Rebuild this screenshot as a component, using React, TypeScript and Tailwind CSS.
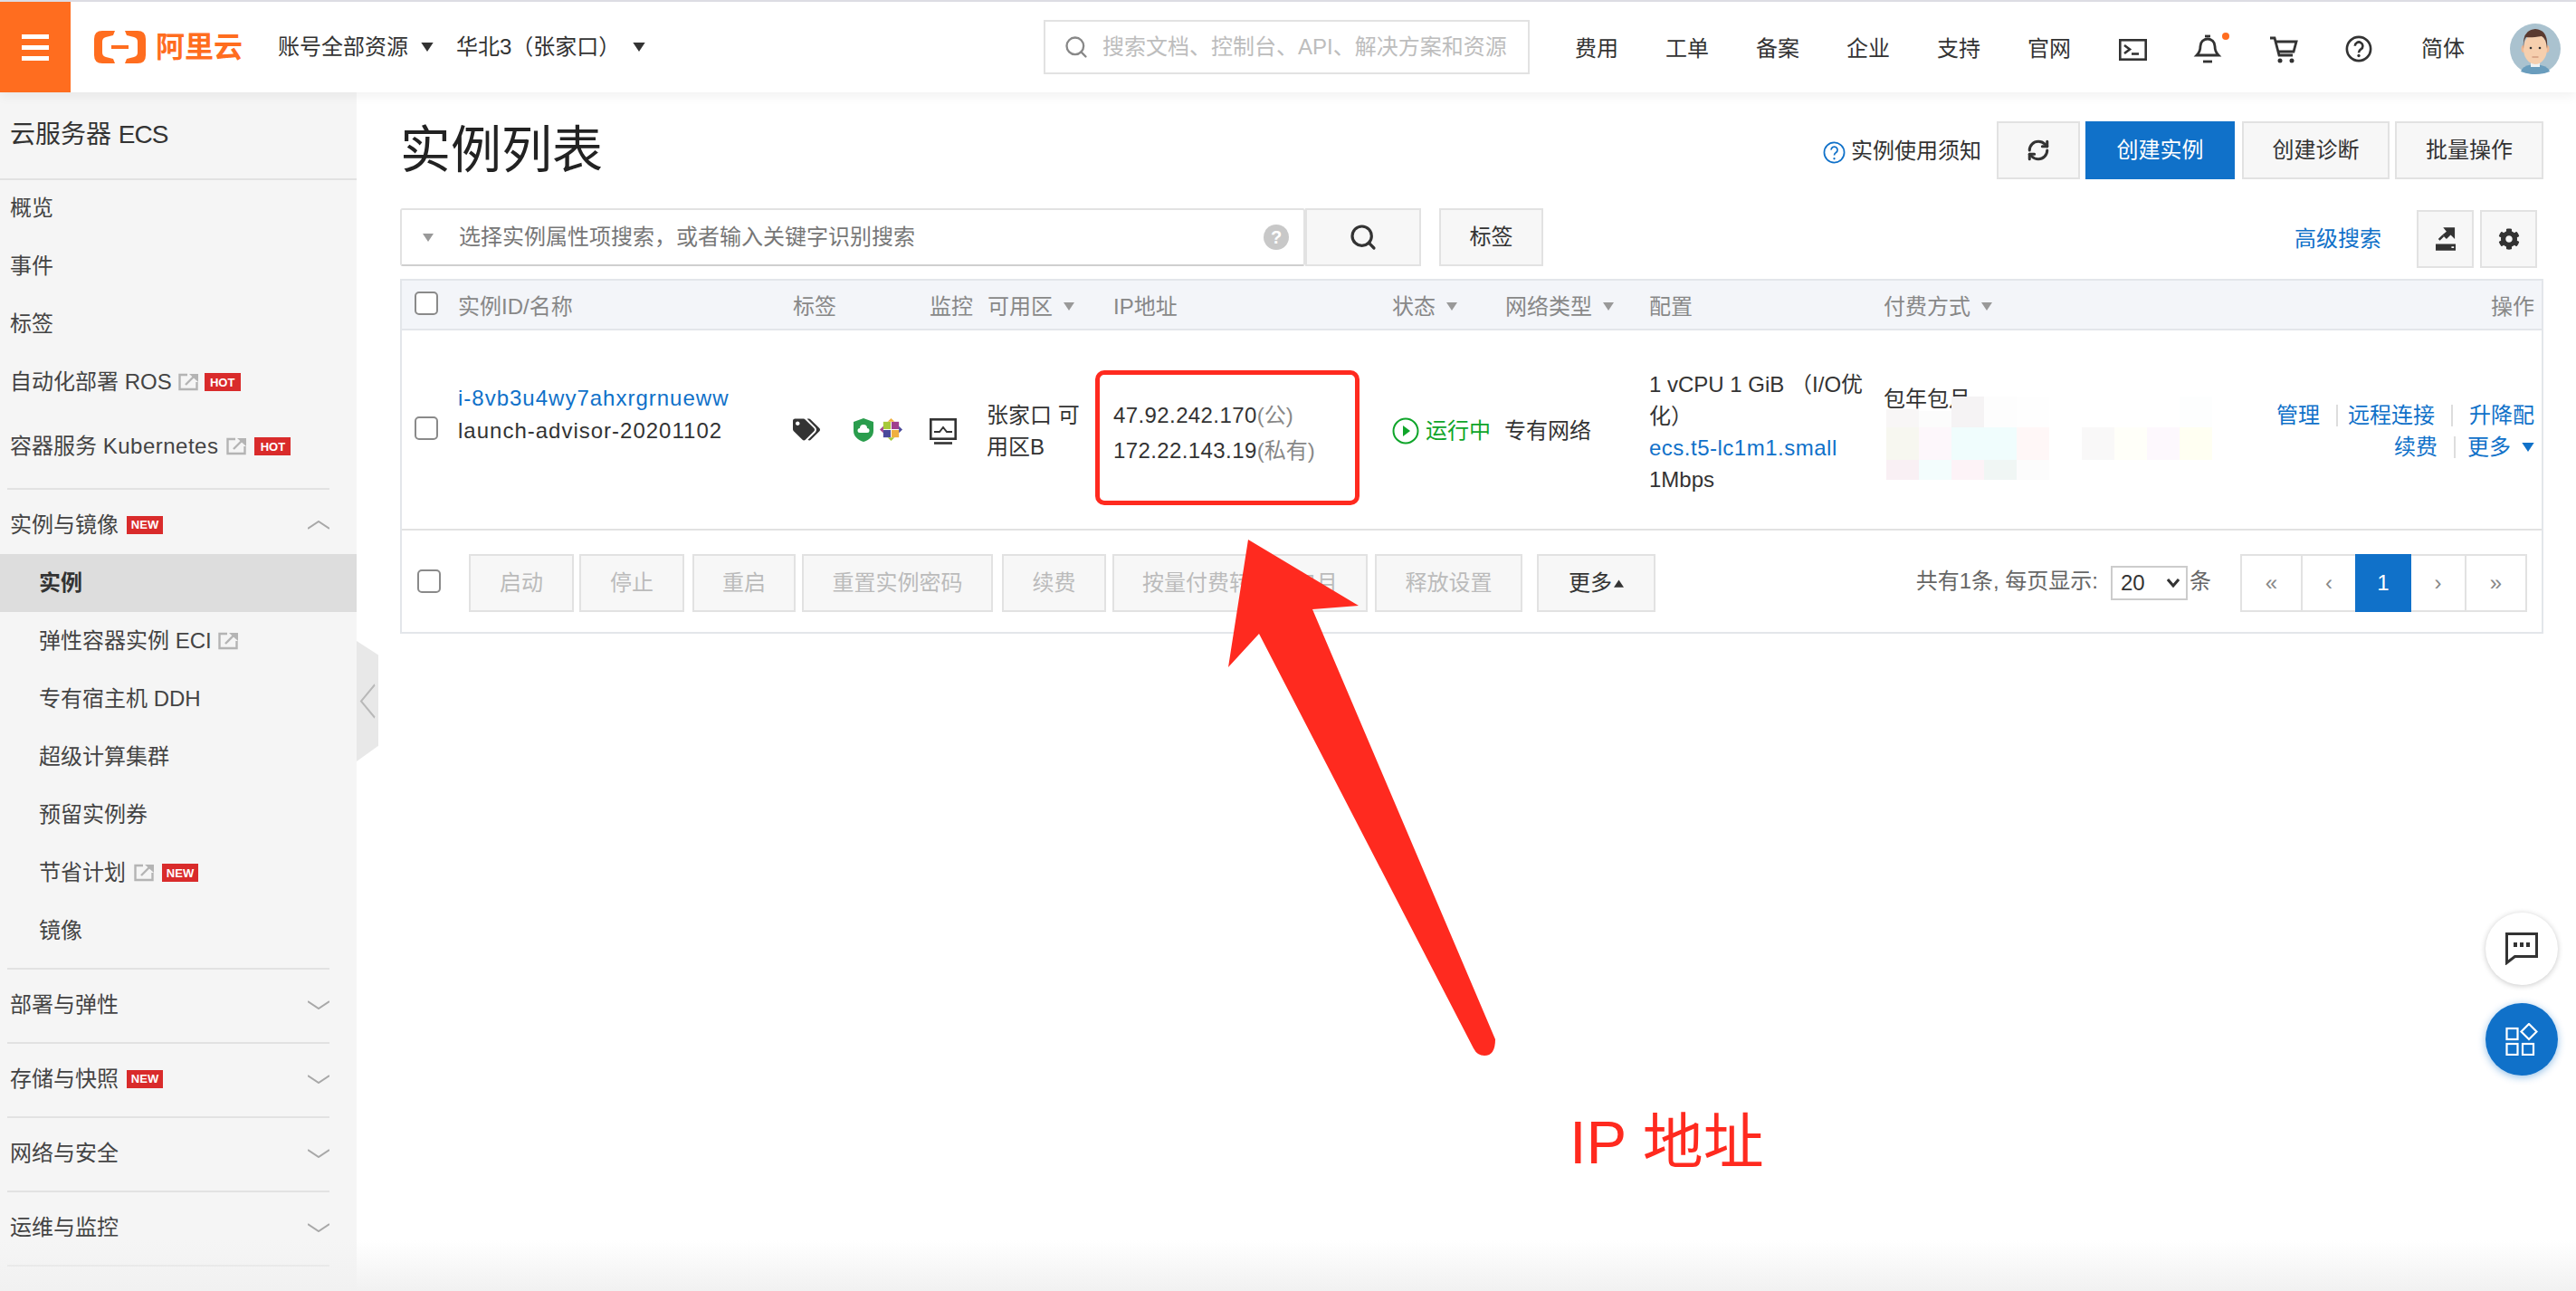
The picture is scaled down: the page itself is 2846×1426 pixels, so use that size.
import { RefreshCw, Search } from 'lucide-react'
import { FaCog, FaTags } from 'react-icons/fa'

const gridCols = 'grid grid-cols-[62px_370px_151px_64px_139px_308px_125px_159px_259px_1fr_auto]'
const btn = 'flex items-center justify-center h-[64px] border-2 border-[#e2e2e2] bg-[#f7f7f7] text-[24px] text-[#333]'

const navItems = ['费用', '工单', '备案', '企业', '支持', '官网']
const footerButtons = [
  { label: '启动', cls: 'w-[116px] ml-[31px]' },
  { label: '停止', cls: 'w-[116px] ml-[6px]' },
  { label: '重启', cls: 'w-[114px] ml-[9px]' },
  { label: '重置实例密码', cls: 'w-[211px] ml-[7px]' },
  { label: '续费', cls: 'w-[115px] ml-[10px]' },
  { label: '按量付费转包年包月', cls: 'w-[282px] ml-[7px]' },
  { label: '释放设置', cls: 'w-[163px] ml-[8px]' },
]
const blurRowHeights = ['h-[34px]', 'h-[36px]', 'h-[22px]']
const blurRows = [
  ['mt-[14px] bg-[#f8f6f6]', 'mt-[16px] bg-[#fcfcfc]', 'bg-[#f5f3f4]', 'bg-[#fdfdfd]', 'bg-[#fefefe]', 'bg-white', 'bg-white', 'bg-white', 'bg-white', 'bg-[#fdfefe]'],
  ['bg-[#f7f7f0]', 'bg-[#fdf7fb]', 'bg-[#f0fdfd]', 'bg-[#f0fdfd]', 'bg-[#fff7f7]', 'bg-white', 'bg-[#f9f8f8]', 'bg-[#fffff9]', 'bg-[#fdf8fd]', 'bg-[#fffff2]'],
  ['bg-[#f9f0f4]', 'bg-[#f3fdfd]', 'bg-[#fdf3f7]', 'bg-[#f0f6f4]', 'bg-[#fcfcfc]', 'bg-transparent', 'bg-transparent', 'bg-transparent', 'bg-transparent', 'bg-transparent'],
]

function Caret({ up, className }: { up?: boolean; className: string }) {
  return (
    <svg viewBox="0 0 12 9" className={className}>
      <path d={up ? 'M6 0l6 9H0z' : 'M0 0h12L6 9z'} fill="currentColor" />
    </svg>
  )
}

function Checkbox() {
  return <div className="w-[26px] h-[26px] rounded-[5px] border-2 border-[#8a8a8a] bg-white" />
}

function Badge({ text }: { text: string }) {
  return (
    <span className="flex items-center justify-center w-[40px] h-[20px] bg-[#d92b2b] text-white text-[13px] font-bold leading-none">
      {text}
    </span>
  )
}

function ExternalIcon() {
  return (
    <svg viewBox="0 0 22 20" className="w-[22px] h-[20px] text-[#b4b4b4]" fill="none" stroke="currentColor" strokeWidth="2.4">
      <path d="M10 2H1.500v16h19v-8" />
      <path d="M8 13l9-9" />
      <path d="M12 1h10v9z" fill="currentColor" stroke="none" />
    </svg>
  )
}

function Chevron({ up }: { up?: boolean }) {
  return (
    <svg viewBox="0 0 24 10" className="w-[24px] h-[10px] text-[#a8a8a8] ml-auto" fill="none" stroke="currentColor" strokeWidth="2">
      <path d={up ? 'M0 9L12 1l12 8' : 'M0 1l12 8L24 1'} />
    </svg>
  )
}

function Logo() {
  const bracket = 'M23 0l-2 5-8 2q-4 1-4 5v12q0 4 4 5l8 2 2 5H9q-9 0-9-9V9q0-9 9-9z'
  return (
    <div className="flex items-center ml-[26px]">
      <svg viewBox="0 0 57 36" className="w-[57px] h-[36px] text-[#ff6d1f]" fill="currentColor">
        <path d={bracket} />
        <path d={bracket} transform="translate(57 0) scale(-1 1)" />
        <rect x="19" y="16" width="19" height="4" />
      </svg>
      <span className="ml-[11px] text-[32px] leading-none font-bold text-[#ff6d1f]">阿里云</span>
    </div>
  )
}

function Avatar() {
  return (
    <svg viewBox="0 0 56 56" className="w-[56px] h-[56px] ml-[50px] mt-[4px]">
      <circle cx="28" cy="28" r="28" fill="#aac2cf" />
      <path d="M12 53q2-7 16-8 14 1 16 8-7 3-16 3t-16-3z" fill="#6a9dbd" />
      <rect x="23" y="38" width="10" height="10" fill="#eef2f4" />
      <ellipse cx="15" cy="28" rx="2.500" ry="4" fill="#efb996" />
      <ellipse cx="41" cy="28" rx="2.500" ry="4" fill="#efb996" />
      <ellipse cx="28" cy="28" rx="13" ry="17" fill="#f6cfae" />
      <path d="M15 28q-2-21 13-22 15 1 13 22-1-12-6-14-12 2-17 1-3 3-3 13z" fill="#5a3a30" />
      <circle cx="23" cy="27" r="1.300" fill="#333" />
      <circle cx="33" cy="27" r="1.300" fill="#333" />
      <path d="M24.500 37h7" stroke="#c98f75" strokeWidth="1.200" />
    </svg>
  )
}

function Header() {
  return (
    <header className="relative z-10 flex items-center h-[100px] bg-white shadow-[0_4px_12px_rgba(0,0,0,0.06)]">
      <div className="flex flex-col items-center justify-center gap-[7px] w-[78px] h-full bg-[#ff6d1f]">
        <div className="w-[30px] h-[5px] bg-white" />
        <div className="w-[30px] h-[5px] bg-white" />
        <div className="w-[30px] h-[5px] bg-white" />
      </div>
      <Logo />
      <div className="flex items-center ml-[39px] text-[24px] text-[#333]">
        <span>账号全部资源</span>
        <Caret className="w-[14px] h-[10px] ml-[14px] text-[#333]" />
        <span className="ml-[25px]">华北3（张家口）</span>
        <Caret className="w-[14px] h-[10px] ml-[14px] text-[#333]" />
      </div>
      <div className="flex items-center w-[537px] h-[60px] ml-auto border-2 border-[#e2e2e2] pl-[20px]">
        <Search className="w-[28px] h-[28px] text-[#888]" strokeWidth={2} />
        <span className="ml-[15px] text-[24px] text-[#bdbdbd] whitespace-nowrap">搜索文档、控制台、API、解决方案和资源</span>
      </div>
      <nav className="flex items-center gap-[52px] ml-[50px] pt-[3px] text-[24px] text-[#333]">
        {navItems.map(item => (
          <span key={item}>{item}</span>
        ))}
      </nav>
      <svg viewBox="0 0 31 24" className="w-[31px] h-[24px] ml-[53px] mt-[6px] text-[#333]" fill="none" stroke="currentColor" strokeWidth="2.600">
        <rect x="1.300" y="1.300" width="28.400" height="21.400" />
        <path d="M6 7l6 4.500L6 16" />
        <path d="M14 16.500h8" />
      </svg>
      <svg viewBox="0 0 42 36" className="w-[42px] h-[36px] ml-[50px] mt-[2px] text-[#333]" fill="none" stroke="currentColor" strokeWidth="2.800">
        <path d="M5 26c3-3 4-5 4-10a8 8 0 0 1 16 0c0 5 1 7 4 10z" />
        <path d="M14 5h6" />
        <path d="M12 33h10" />
        <circle cx="37" cy="5" r="4" fill="#ff6d1f" stroke="none" />
      </svg>
      <svg viewBox="0 0 32 30" className="w-[32px] h-[30px] ml-[43px] mt-[6px] text-[#333]" fill="none" stroke="currentColor" strokeWidth="2.800">
        <path d="M1 2h5l5 19h15" />
        <path d="M7 6h23l-3 11H10" />
        <circle cx="12" cy="27" r="2.500" fill="currentColor" stroke="none" />
        <circle cx="25" cy="27" r="2.500" fill="currentColor" stroke="none" />
      </svg>
      <svg viewBox="0 0 32 32" className="w-[30px] h-[30px] ml-[52px] mt-[4px] text-[#333]" fill="none" stroke="currentColor" strokeWidth="2.800">
        <circle cx="16" cy="16" r="14" />
        <path d="M11.500 12.500a4.600 4.600 0 1 1 7 4c-1.800 1.100-2.500 2-2.500 4" />
        <circle cx="16" cy="24" r="1.800" fill="currentColor" stroke="none" />
      </svg>
      <span className="ml-[54px] pt-[3px] text-[24px] text-[#333]">简体</span>
      <Avatar />
      <div className="w-[17px]" />
    </header>
  )
}

function SidebarSection({ title, badge }: { title: string; badge?: boolean }) {
  return (
    <div className="flex items-center h-[77px] pb-[3px] ml-[8px] mr-[30px] pl-[3px] border-t-2 border-[#e2e2e2] text-[24px] text-[#444] box-content">
      <span>{title}</span>
      {badge && <span className="ml-[9px]"><Badge text="NEW" /></span>}
      <Chevron />
    </div>
  )
}

function Sidebar() {
  return (
    <aside className="w-[394px] shrink-0 bg-[#f5f5f5] text-[24px] text-[#444]">
      <div className="flex items-center h-[94px] pl-[11px] pb-[1px] border-b-2 border-[#e2e2e2] text-[28px] text-[#333] box-content -mb-[1px]">
        <span>云服务器 <span className="tracking-[-1px]">ECS</span></span>
      </div>
      {['概览', '事件', '标签'].map(t => (
        <div key={t} className="flex items-center h-[64px] pl-[11px]">{t}</div>
      ))}
      <div className="flex items-center gap-[7px] h-[64px] pl-[11px]">
        <span>自动化部署 ROS</span>
        <ExternalIcon />
        <Badge text="HOT" />
      </div>
      <div className="flex items-center gap-[9px] h-[78px] pl-[11px]">
        <span>容器服务 <span className="tracking-[0.5px]">Kubernetes</span></span>
        <ExternalIcon />
        <Badge text="HOT" />
      </div>
      <div className="flex items-center h-[65px] pt-[6px] pb-[2px] mt-[7px] ml-[8px] mr-[30px] pl-[3px] border-t-2 border-[#e2e2e2] box-content -mb-[2px]">
        <span>实例与镜像</span>
        <span className="ml-[9px]"><Badge text="NEW" /></span>
        <Chevron up />
      </div>
      <div className="flex items-center h-[64px] pl-[43px] bg-[#dddddd] font-bold text-[#333]">实例</div>
      <div className="flex items-center gap-[7px] h-[64px] pl-[43px]">
        <span>弹性容器实例 ECI</span>
        <ExternalIcon />
      </div>
      <div className="flex items-center h-[64px] pl-[43px]">专有宿主机 DDH</div>
      <div className="flex items-center h-[64px] pl-[43px]">超级计算集群</div>
      <div className="flex items-center h-[64px] pl-[43px]">预留实例券</div>
      <div className="flex items-center gap-[9px] h-[64px] pl-[43px]">
        <span>节省计划</span>
        <ExternalIcon />
        <Badge text="NEW" />
      </div>
      <div className="flex items-center h-[64px] pl-[43px] mb-[9px]">镜像</div>
      <SidebarSection title="部署与弹性" />
      <SidebarSection title="存储与快照" badge />
      <SidebarSection title="网络与安全" />
      <SidebarSection title="运维与监控" />
      <div className="ml-[8px] mr-[30px] border-t-2 border-[#e2e2e2]" />
    </aside>
  )
}

function Toolbar() {
  return (
    <div className="flex items-center justify-between h-[64px]">
      <h1 className="text-[56px] font-normal leading-none text-[#222]">实例列表</h1>
      <div className="flex items-center">
        <svg viewBox="0 0 26 26" className="w-[25px] h-[25px] mt-[4px] text-[#1071c9]" fill="none" stroke="currentColor" strokeWidth="1.800">
          <circle cx="13" cy="13" r="11.500" />
          <path d="M9.500 10a3.600 3.600 0 1 1 5.500 3c-1.400.9-2 1.600-2 3.200" />
          <circle cx="13" cy="20" r="1.200" fill="currentColor" stroke="none" />
        </svg>
        <span className="mt-[2px] ml-[6px] mr-[17px] text-[24px] text-[#333] whitespace-nowrap">实例使用须知</span>
        <button className={`${btn} w-[92px]`}>
          <RefreshCw className="w-[26px] h-[26px] text-[#333]" strokeWidth={2.800} />
        </button>
        <button className="flex items-center justify-center w-[165px] h-[64px] ml-[6px] bg-[#1071c9] text-[24px] text-white">创建实例</button>
        <button className={`${btn} w-[163px] ml-[8px]`}>创建诊断</button>
        <button className={`${btn} w-[164px] ml-[6px]`}>批量操作</button>
      </div>
    </div>
  )
}

function SearchRow() {
  return (
    <div className="flex items-center h-[64px] mt-[32px]">
      <div className="flex items-center w-[1000px] h-[64px] rounded-[3px] border-2 border-[#e2e2e2] border-b-[#cfcfcf] pl-[22px] bg-white">
        <Caret className="w-[14px] h-[9px] text-[#999]" />
        <span className="ml-[27px] text-[24px] text-[#777]">选择实例属性项搜索，或者输入关键字识别搜索</span>
        <span className="flex items-center justify-center ml-auto mr-[16px] w-[28px] h-[28px] rounded-full bg-[#c8c8c8] text-[20px] font-bold text-white">?</span>
      </div>
      <button className={`${btn} w-[128px]`}>
        <Search className="w-[32px] h-[32px] text-[#333]" strokeWidth={2.400} />
      </button>
      <button className={`${btn} w-[115px] ml-[20px]`}>标签</button>
      <span className="ml-auto mt-[3px] text-[24px] text-[#1071c9]">高级搜索</span>
      <button className={`${btn} w-[63px] ml-[39px] mt-[4px]`}>
        <svg viewBox="0 0 24 28" className="w-[22px] h-[26px] text-[#333]" fill="currentColor">
          <path d="M9 0h14v14l-5-5-5 5-5-5 5-4z" />
          <path d="M3 14l5-5 2 2-5 5z" />
          <path d="M0 20h24v8H0zM19 23v2h3v-2z" fillRule="evenodd" />
        </svg>
      </button>
      <button className={`${btn} w-[63px] ml-[7px] mr-[7px] mt-[4px]`}>
        <FaCog className="w-[24px] h-[24px] text-[#333]" />
      </button>
    </div>
  )
}

function CentosIcon() {
  return (
    <svg viewBox="0 0 26 26" className="w-[25px] h-[25px]">
      <rect x="4" y="4" width="8.500" height="8.500" fill="#a7c93a" />
      <rect x="13.500" y="4" width="8.500" height="8.500" fill="#a0408e" />
      <rect x="4" y="13.500" width="8.500" height="8.500" fill="#4a4a9a" />
      <rect x="13.500" y="13.500" width="8.500" height="8.500" fill="#f0b040" />
      <path d="M13 0l4 4H9z" fill="#f0b040" />
      <path d="M26 13l-4 4V9z" fill="#4a4a9a" />
      <path d="M13 26l-4-4h8z" fill="#a7c93a" />
      <path d="M0 13l4-4v8z" fill="#a0408e" />
    </svg>
  )
}

function InstanceTable() {
  return (
    <div className="mt-[14px] border-2 border-[#e3e6ea] bg-white text-[24px]">
      <div className={`${gridCols} items-center h-[49px] pt-[4px] bg-[#f3f5f9] text-[#888] border-b-2 border-[#e3e6ea] box-content`}>
        <div className="pl-[14px] -mt-[8px]"><Checkbox /></div>
        <div>实例ID/名称</div>
        <div>标签</div>
        <div>监控</div>
        <div className="flex items-center gap-[12px]">可用区<Caret className="w-[12px] h-[9px] text-[#999]" /></div>
        <div>IP地址</div>
        <div className="flex items-center gap-[12px]">状态<Caret className="w-[12px] h-[9px] text-[#999]" /></div>
        <div className="flex items-center gap-[12px]">网络类型<Caret className="w-[12px] h-[9px] text-[#999]" /></div>
        <div>配置</div>
        <div className="flex items-center gap-[12px]">付费方式<Caret className="w-[12px] h-[9px] text-[#999]" /></div>
        <div className="pr-[8px] text-right">操作</div>
      </div>
      <div className={`${gridCols} items-start h-[219px] text-[#333] border-b-2 border-[#e2e2e2] box-content whitespace-nowrap`}>
        <div className="pl-[14px] pt-[95px]"><Checkbox /></div>
        <div className="pt-[57px] leading-[36px] tracking-[1px]">
          <div className="text-[#1071c9]">i-8vb3u4wy7ahxrgrnueww</div>
          <div>launch-advisor-20201102</div>
        </div>
        <div className="pt-[97px] flex items-start">
          <FaTags className="w-[30px] h-[25px] mr-[37px] text-[#333]" />
          <svg viewBox="0 0 22 26" className="w-[22px] h-[26px] mr-[7px]">
            <path d="M11 0l11 4v10c0 6-5 10-11 12C5 24 0 20 0 14V4z" fill="#2a9d4d" />
            <path d="M7 16a2.500 2.500 0 0 1 0-5 4 4 0 0 1 8 0 2.500 2.500 0 0 1 0 5z" fill="#fff" />
          </svg>
          <CentosIcon />
        </div>
        <div className="pt-[97px]">
          <svg viewBox="0 0 30 29" className="w-[30px] h-[29px] text-[#333]" fill="none" stroke="currentColor" strokeWidth="2.600">
            <rect x="1.300" y="1.300" width="27.400" height="21.400" />
            <path d="M5 15h6l4-5 4 5h6" strokeWidth="2" />
            <path d="M5 27.500h20" />
          </svg>
        </div>
        <div className="pt-[76px] -ml-[1px] leading-[35px]">
          <div>张家口 可</div>
          <div>用区B</div>
        </div>
        <div className="pt-[74px] leading-[39px]">
          <div><span className="tracking-[0.4px]">47.92.242.170</span><span className="text-[#888]">(公)</span></div>
          <div><span className="tracking-[0.4px]">172.22.143.19</span><span className="text-[#888]">(私有)</span></div>
        </div>
        <div className="pt-[93px] leading-[36px] flex items-center gap-[7px] text-[#0fa52a]">
          <svg viewBox="0 0 30 30" className="w-[30px] h-[30px]" fill="none" stroke="currentColor" strokeWidth="2">
            <circle cx="15" cy="15" r="13.500" />
            <path d="M12 9l8 6-8 6z" fill="currentColor" stroke="none" />
          </svg>
          运行中
        </div>
        <div className="pt-[93px] -ml-[1px] leading-[36px]">专有网络</div>
        <div className="pt-[42px] leading-[35px]">
          <div>1 vCPU 1 GiB （I/O优</div>
          <div>化）</div>
          <div className="text-[#1071c9] tracking-[0.5px]">ecs.t5-lc1m1.small</div>
          <div>1Mbps</div>
        </div>
        <div className="pt-[58px] leading-[36px]">包年包月</div>
        <div className="pt-[76px] pr-[8px] leading-[35px] text-[#1071c9]">
          <div className="flex items-center justify-end gap-[18px]">
            <span>管理</span>
            <span className="w-[2px] h-[24px] bg-[#ddd]" />
            <span className="-ml-[7px]">远程连接</span>
            <span className="w-[2px] h-[24px] bg-[#ddd]" />
            <span>升降配</span>
          </div>
          <div className="flex items-center justify-end gap-[18px]">
            <span>续费</span>
            <span className="w-[2px] h-[24px] bg-[#ddd]" />
            <span className="-ml-[5px] flex items-center gap-[12px]">更多<Caret className="w-[14px] h-[10px]" /></span>
          </div>
        </div>
      </div>
      <div className="flex items-center h-[108px] pt-[4px] pl-[17px] pr-[16px] box-content">
        <div className="-mt-[4px]"><Checkbox /></div>
        {footerButtons.map(b => (
          <button key={b.label} className={`${btn} ${b.cls} !text-[#bbb]`}>{b.label}</button>
        ))}
        <button className={`${btn} w-[131px] ml-[16px] gap-[2px]`}>
          更多<Caret up className="w-[11px] h-[9px] text-[#333]" />
        </button>
        <div className="flex items-center ml-auto text-[#666]">
          <span className="-mt-[4px]">共有1条, 每页显示:</span>
          <div className="flex items-center w-[85px] h-[38px] ml-[14px] pl-[9px] border-2 border-[#ccc] text-[#333]">
            20
            <svg viewBox="0 0 14 10" className="w-[14px] h-[10px] ml-auto mr-[7px] text-[#333]" fill="none" stroke="currentColor" strokeWidth="3">
              <path d="M1 1l6 7 6-7" />
            </svg>
          </div>
          <span className="ml-[2px] -mt-[4px]">条</span>
        </div>
        <div className="flex h-[64px] ml-[32px] border-2 border-[#e2e2e2] text-[#888]">
          <span className="flex items-center justify-center w-[67px] border-r-2 border-[#e2e2e2]">«</span>
          <span className="flex items-center justify-center w-[58px]">‹</span>
          <span className="flex items-center justify-center w-[62px] -my-[2px] bg-[#1071c9] text-white">1</span>
          <span className="flex items-center justify-center w-[61px] border-r-2 border-[#e2e2e2]">›</span>
          <span className="flex items-center justify-center w-[65px]">»</span>
        </div>
      </div>
    </div>
  )
}

export default function App() {
  return (
    <div className="relative w-full h-[1426px] overflow-hidden bg-white font-['Liberation_Sans','Noto_Sans_CJK_SC',sans-serif]">
      <div className="h-[2px] bg-[#dfdfe6]" />
      <Header />
      <div className="flex h-[1324px]">
        <Sidebar />
        <main className="flex-1 min-w-0 pt-[32px] pl-[48px] pr-[36px]">
          <Toolbar />
          <SearchRow />
          <InstanceTable />
        </main>
      </div>

      {/* sidebar collapse tab */}
      <svg viewBox="0 0 24 77" preserveAspectRatio="none" className="absolute left-[394px] top-[708px] w-[24px] h-[133px]">
        <path d="M0 0l24 9v58L0 77z" fill="#e8e8e8" />
        <path d="M20 28L5 38.500 20 49" fill="none" stroke="#b8b8b8" strokeWidth="1.500" />
      </svg>

      {/* mosaic over the payment cell */}
      <div className="absolute left-[2084px] top-[438px] w-[360px]">
        {blurRows.map((row, r) => (
          <div key={r} className={`flex ${blurRowHeights[r]}`}>
            {row.map((cell, c) => (
              <div key={c} className={`w-[36px] ${cell}`} />
            ))}
          </div>
        ))}
      </div>

      {/* annotation */}
      <div className="absolute left-[1210px] top-[409px] w-[292px] h-[149px] rounded-[10px] border-[5px] border-[#ff2a1f]" />
      <svg viewBox="0 0 2846 1426" className="absolute inset-0 w-[2846px] h-[1426px] pointer-events-none">
        <path
          d="M1379 596L1501 669 1450 673 1652 1148Q1652 1166 1640 1166 1632 1166 1628 1158L1391 700 1357 737z"
          fill="#ff2a1f"
        />
      </svg>
      <span className="absolute left-[1734px] top-[1222px] text-[67px] leading-[80px] text-[#ff2a1f] whitespace-nowrap">IP 地址</span>

      {/* floating buttons */}
      <div className="absolute right-[20px] top-[1008px] flex flex-col gap-[20px]">
        <div className="flex items-center justify-center w-[80px] h-[80px] rounded-full bg-white shadow-[0_1px_6px_rgba(0,0,0,0.22)]">
          <svg viewBox="0 0 36 36" className="w-[36px] h-[36px] text-[#333]" fill="none" stroke="currentColor" strokeWidth="3">
            <path d="M1.500 1.500h33v25h-24l-9 7z" />
            <rect x="9" y="11" width="4" height="5" fill="currentColor" stroke="none" />
            <rect x="16" y="11" width="4" height="5" fill="currentColor" stroke="none" />
            <rect x="23" y="11" width="4" height="5" fill="currentColor" stroke="none" />
          </svg>
        </div>
        <div className="flex items-center justify-center w-[80px] h-[80px] rounded-full bg-[#1071c9] shadow-[0_2px_8px_rgba(16,113,201,0.45)]">
          <svg viewBox="0 0 36 36" className="w-[36px] h-[36px] text-white" fill="none" stroke="currentColor" strokeWidth="2.200">
            <rect x="1.500" y="6" width="12" height="12" />
            <rect x="1.500" y="23" width="12" height="12" />
            <rect x="19" y="23" width="12" height="12" />
            <path d="M26 1l8.500 8.500L26 18l-8.500-8.500z" />
          </svg>
        </div>
      </div>

      <div className="absolute left-0 right-0 bottom-0 h-[56px] bg-gradient-to-b from-transparent to-[#f1f1f1] pointer-events-none" />
    </div>
  )
}
